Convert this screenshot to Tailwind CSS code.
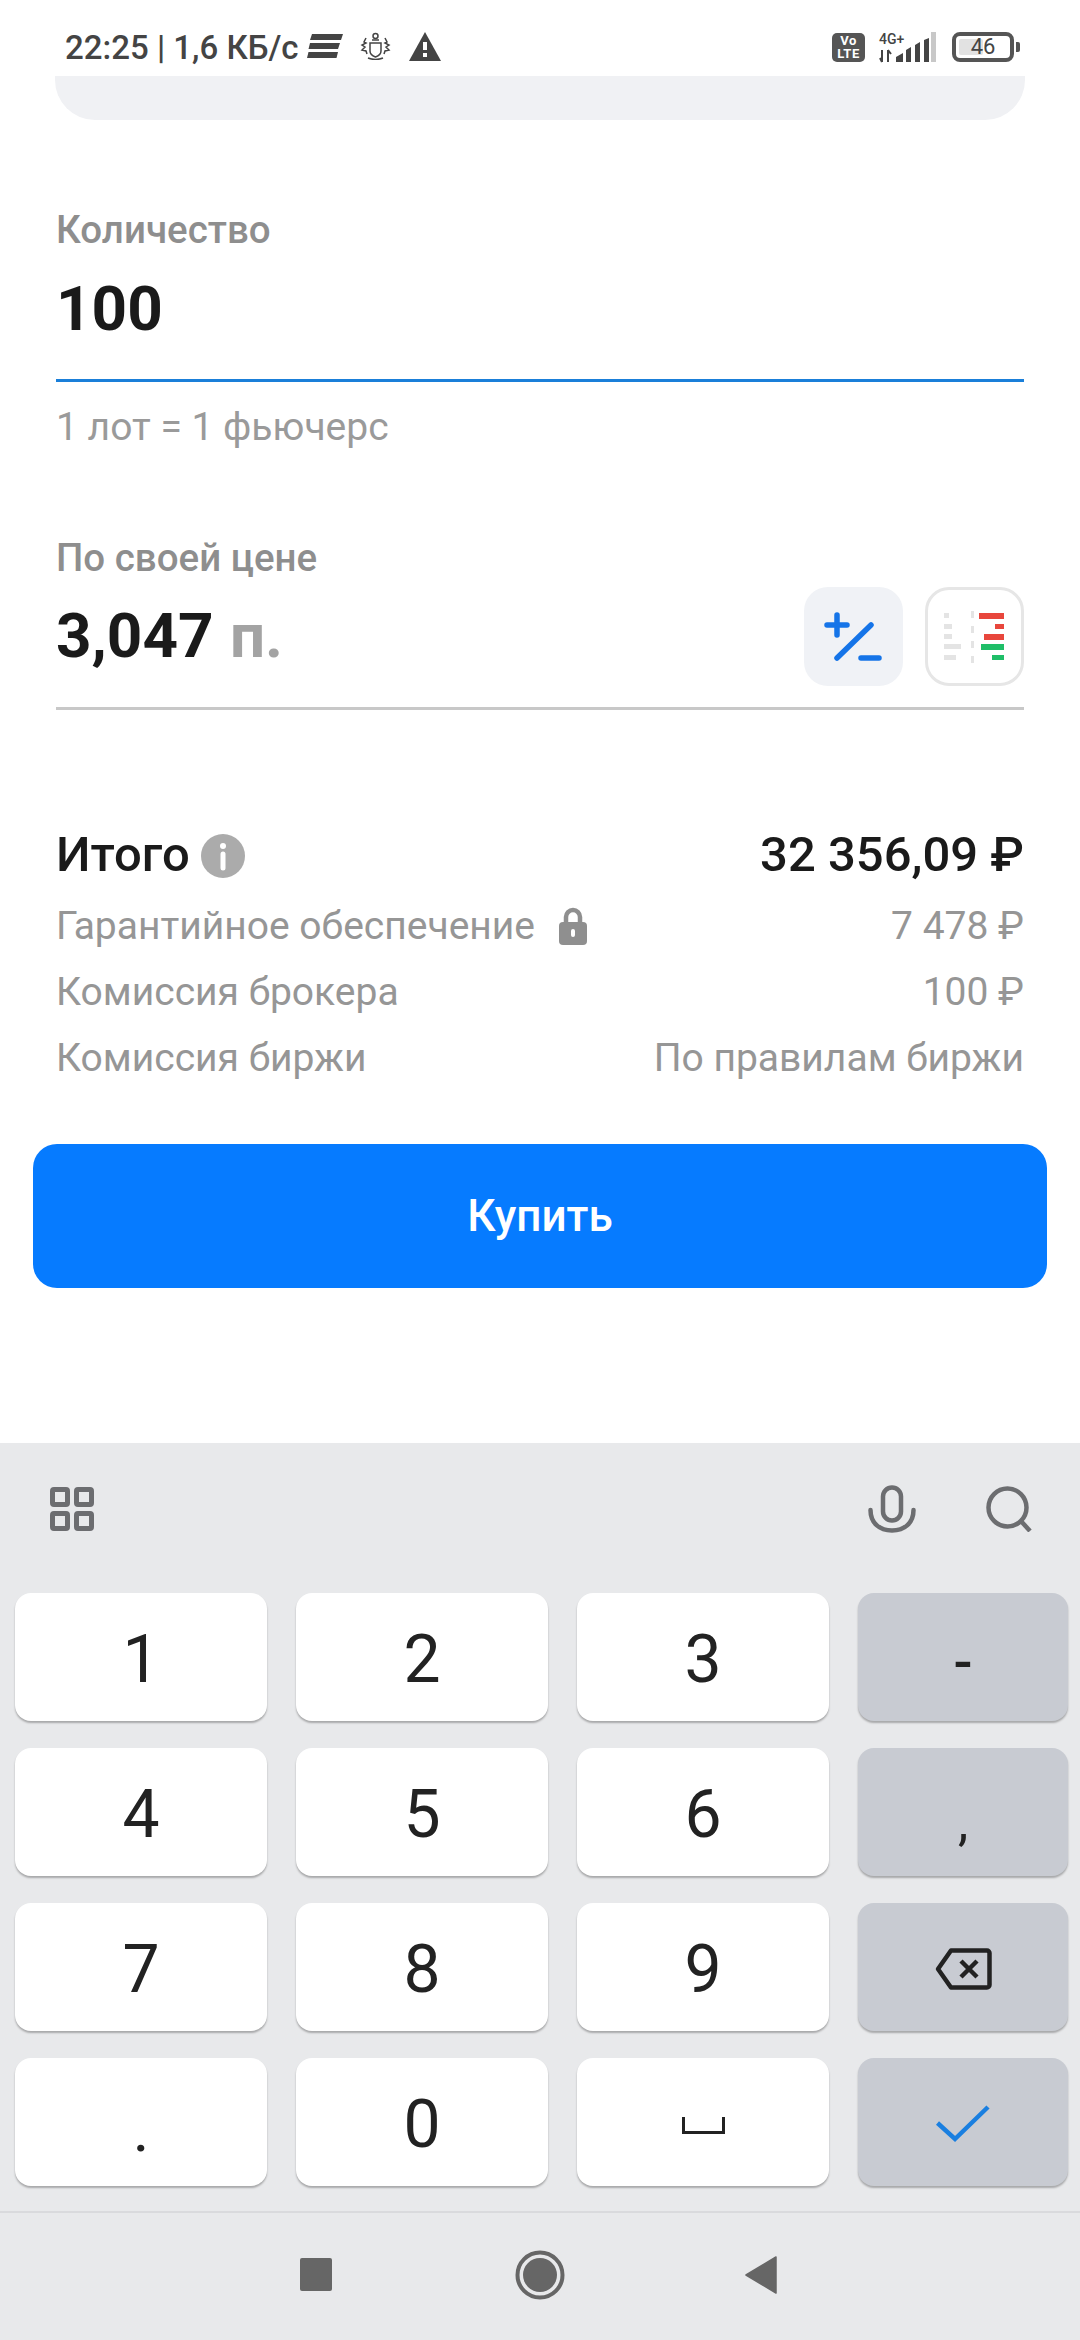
<!DOCTYPE html>
<html lang="ru">
<head>
  <meta charset="UTF-8">
  <title>Купить фьючерс</title>
  <script src="https://cdn.jsdelivr.net/npm/@tailwindcss/browser@4"></script>
</head>
<body class="bg-white">
  <div class="w-[1080px] h-[2340px] overflow-hidden flex flex-col font-['Roboto',sans-serif] text-[#1a1a1a]">

    <!-- status bar -->
    <div class="h-[76px] shrink-0 flex items-center justify-between pt-[18px] pl-[65px] pr-[60px] text-[#444]">
      <div class="flex items-center pt-[1px]">
        <span class="text-[33px] leading-none font-medium w-[242px] whitespace-nowrap">22:25 | 1,6 КБ/с</span>
        <svg class="w-[36px] h-[24px] mt-[-3px]" viewBox="0 0 36 24" fill="#444"><path d="M5 0h31l-2 6H3zM3 9h30l-2 6H1.500zM1.500 18H31l-1.500 6H0z"/></svg>
        <svg class="w-[33px] h-[28px] ml-[16px] mt-[-3px]" viewBox="0 0 33 28" fill="none" stroke="#444" stroke-width="1.500"><path d="M11 11h11v8q0 4-5.500 6q-5.500-2-5.500-6z"/><circle cx="16.500" cy="4" r="2.500"/><path d="M13 8h7M7 6l-2 4 2 1-4 2 3 2-3 3 4 1 1 3M26 6l2 4-2 1 4 2-3 2 3 3-4 1-1 3M9 26q7.500 3 15 0"/></svg>
        <svg class="w-[32px] h-[29px] ml-[17px] mt-[-3px]" viewBox="0 0 32 29"><path d="M16 0 32 29H0z" fill="#444"/><path d="M14 10h4v8h-4zM14 21h4v4h-4z" fill="#fff"/></svg>
      </div>
      <div class="flex items-center">
        <div class="w-[33px] h-[29px] rounded-[5px] bg-[#555] text-white flex flex-col items-center justify-center font-bold text-[13px] leading-[13px] tracking-[0.5px]"><span>Vo</span><span>LTE</span></div>
        <svg class="w-[58px] h-[31px] ml-[14px] overflow-visible" viewBox="0 0 58 31">
          <text x="0" y="12" font-family="Roboto" font-weight="500" font-size="14" fill="#444">4G+</text>
          <path d="M3 18v12M1 26l2 4M9 18v12M9 18l3 4" stroke="#444" stroke-width="2" fill="none"/>
          <path d="M17 30v-5l7-4v9zM27 30V18l5-3v15zM36 30V13l5-3v20z" fill="#444"/>
          <path d="M45 30V8l5-2v24z" fill="#444"/>
          <path d="M52 30V0h5v30z" fill="#c8c8c8"/>
        </svg>
        <div class="w-[62px] h-[30px] ml-[15px] rounded-[8px] border-[4px] border-[#555] relative flex items-center justify-center">
          <div class="absolute left-[3px] top-[3px] bottom-[3px] w-[24px] bg-[#e2e2e2] rounded-[2px]"></div>
          <span class="relative text-[22px] leading-none">46</span>
        </div>
        <div class="w-[4px] h-[10px] ml-[2px] bg-[#555] rounded-r-[2px]"></div>
      </div>
    </div>

    <!-- top of the previous card -->
    <div class="mx-[55px] h-[44px] shrink-0 bg-[#f0f1f4] rounded-b-[40px]"></div>

    <div class="px-[56px] shrink-0">
      <div class="mt-[90px] h-[40px] flex items-center text-[38.500px] font-medium text-[#8e8e8e]">Количество</div>
      <div class="mt-[8px] h-[124px] pb-[20px] flex items-center text-[62px] font-bold leading-none border-b-[3px] border-[#1a7fd9]">100</div>
      <div class="mt-[24px] h-[42px] flex items-center text-[39px] text-[#9a9a9a]">1 лот = 1 фьючерс</div>

      <div class="mt-[89px] h-[42px] flex items-center text-[38.500px] font-medium text-[#8e8e8e]">По своей цене</div>
      <div class="mt-[7px] h-[124px] pb-[21px] flex items-center justify-between border-b-[3px] border-[#c8c8c8]">
        <div class="text-[62px] font-bold leading-none">3,047 <span class="text-[#a3a3a3] ml-[1px]">п.</span></div>
        <div class="flex gap-[22px]">
          <div class="w-[99px] h-[99px] rounded-[24px] bg-[#f0f2f6]">
            <svg class="w-[99px] h-[99px]" viewBox="0 0 99 99" fill="none" stroke="#1574e8" stroke-width="5.500" stroke-linecap="round"><path d="M23 38h20M33 28v20M33 71 67 38M57 71h18"/></svg>
          </div>
          <div class="w-[99px] h-[99px] rounded-[24px] border-[3px] border-[#e6e6e6] bg-white">
            <svg class="w-[93px] h-[93px]" viewBox="3 3 93 93">
              <path d="M54 26h25v6H54zM70 37h9v5h-9zM59 47h20v6H59z" fill="#e8463c"/>
              <path d="M56 57h23v6H56zM67 68h12v5H67z" fill="#1fbe68"/>
              <path d="M19 26h5v5h-5zM19 37h8v5h-8zM19 47h8v5h-8zM19 57h17v5H19zM19 68h12v5H19zM46 24h3v7h-3zM46 39h3v7h-3zM46 54h3v7h-3zM46 69h3v7h-3z" fill="#e4e4e4"/>
            </svg>
          </div>
        </div>
      </div>

      <div class="mt-[117px] h-[54px] flex items-center justify-between text-[49px] font-medium leading-none">
        <div class="flex items-center">
          <span>Итого</span>
          <svg class="w-[44px] h-[44px] ml-[11px] mt-[4px]" viewBox="0 0 44 44"><circle cx="22" cy="22" r="22" fill="#ababab"/><circle cx="22" cy="12" r="3" fill="#fff"/><path d="M22 20v14" stroke="#fff" stroke-width="5" stroke-linecap="round"/></svg>
        </div>
        <span>32 356,09 ₽</span>
      </div>
      <div class="mt-[12px] flex flex-col text-[39px] text-[#969696] leading-none">
        <div class="h-[66px] flex items-center justify-between">
          <div class="flex items-center">
            <span>Гарантийное обеспечение</span>
            <svg class="w-[28px] h-[38px] ml-[24px]" viewBox="0 0 28 38"><path d="M7 18v-8a7 7 0 0 1 14 0v8" fill="none" stroke="#8f8f8f" stroke-width="4.500"/><rect x="0" y="15" width="28" height="23" rx="4" fill="#8f8f8f"/><rect x="12" y="22" width="4" height="8" rx="2" fill="#fff"/></svg>
          </div>
          <span>7 478 ₽</span>
        </div>
        <div class="h-[66px] flex items-center justify-between"><span>Комиссия брокера</span><span>100 ₽</span></div>
        <div class="h-[66px] flex items-center justify-between"><span>Комиссия биржи</span><span>По правилам биржи</span></div>
      </div>
    </div>

    <div class="mx-[33px] mt-[53px] h-[144px] shrink-0 rounded-[24px] bg-[#067bff] text-white flex items-center justify-center text-[44px] font-medium">Купить</div>

    <!-- keyboard -->
    <div class="mt-[155px] flex-1 bg-[#e8e9eb] flex flex-col">
      <div class="h-[150px] shrink-0 flex items-center justify-between pl-[50px] pr-[48px]">
        <svg class="w-[44px] h-[44px] mt-[-19px]" viewBox="0 0 44 44" fill="none" stroke="#6c6d70" stroke-width="5"><rect x="2.500" y="2.500" width="15" height="15" rx="1.500"/><rect x="26.500" y="2.500" width="15" height="15" rx="1.500"/><rect x="2.500" y="26.500" width="15" height="15" rx="1.500"/><rect x="26.500" y="26.500" width="15" height="15" rx="1.500"/></svg>
        <div class="flex items-center gap-[70px] mt-[-19px]">
          <svg class="w-[48px] h-[48px]" viewBox="0 0 48 48" fill="none" stroke="#6c6d70" stroke-width="4.500" stroke-linecap="round"><rect x="15" y="2.500" width="18" height="33" rx="9"/><path d="M2.500 25c0 13 9 20.500 21.500 20.500S45.500 38 45.500 25"/></svg>
          <svg class="w-[46px] h-[46px]" viewBox="0 0 46 46" fill="none" stroke="#6c6d70" stroke-width="4.500"><circle cx="21.500" cy="21.500" r="19"/><path d="M34 34 44 45"/></svg>
        </div>
      </div>
      <div class="grid grid-cols-[252px_252px_252px_210px] grid-rows-[128px_128px_128px_128px] gap-x-[29px] gap-y-[27px] pl-[15px] text-[66px] leading-none text-[#222]">
        <div class="bg-white rounded-[16px] shadow-[0_2px_2px_rgba(0,0,0,0.28)] flex items-center justify-center pt-[5px]">1</div>
        <div class="bg-white rounded-[16px] shadow-[0_2px_2px_rgba(0,0,0,0.28)] flex items-center justify-center pt-[5px]">2</div>
        <div class="bg-white rounded-[16px] shadow-[0_2px_2px_rgba(0,0,0,0.28)] flex items-center justify-center pt-[5px]">3</div>
        <div class="bg-[#c8cbd2] rounded-[16px] shadow-[0_2px_2px_rgba(0,0,0,0.28)] flex items-center justify-center text-[56px] font-medium pt-[10px]">-</div>
        <div class="bg-white rounded-[16px] shadow-[0_2px_2px_rgba(0,0,0,0.28)] flex items-center justify-center pt-[5px]">4</div>
        <div class="bg-white rounded-[16px] shadow-[0_2px_2px_rgba(0,0,0,0.28)] flex items-center justify-center pt-[5px]">5</div>
        <div class="bg-white rounded-[16px] shadow-[0_2px_2px_rgba(0,0,0,0.28)] flex items-center justify-center pt-[5px]">6</div>
        <div class="bg-[#c8cbd2] rounded-[16px] shadow-[0_2px_2px_rgba(0,0,0,0.28)] flex items-center justify-center text-[52px] pt-[22px]">,</div>
        <div class="bg-white rounded-[16px] shadow-[0_2px_2px_rgba(0,0,0,0.28)] flex items-center justify-center pt-[5px]">7</div>
        <div class="bg-white rounded-[16px] shadow-[0_2px_2px_rgba(0,0,0,0.28)] flex items-center justify-center pt-[5px]">8</div>
        <div class="bg-white rounded-[16px] shadow-[0_2px_2px_rgba(0,0,0,0.28)] flex items-center justify-center pt-[5px]">9</div>
        <div class="bg-[#c8cbd2] rounded-[16px] shadow-[0_2px_2px_rgba(0,0,0,0.28)] flex items-center justify-center pt-[4px]">
          <svg class="w-[57px] h-[42px]" viewBox="0 0 57 42" fill="none" stroke="#222" stroke-width="4.500" stroke-linejoin="round"><path d="M16 2.500h36a2.500 2.500 0 0 1 2.500 2.500v32a2.500 2.500 0 0 1-2.500 2.500H16L3 21z"/><path d="M26 13l16 16M42 13 26 29"/></svg>
        </div>
        <div class="bg-white rounded-[16px] shadow-[0_2px_2px_rgba(0,0,0,0.28)] flex items-center justify-center text-[52px] pt-[24px] font-medium">.</div>
        <div class="bg-white rounded-[16px] shadow-[0_2px_2px_rgba(0,0,0,0.28)] flex items-center justify-center pt-[5px]">0</div>
        <div class="bg-white rounded-[16px] shadow-[0_2px_2px_rgba(0,0,0,0.28)] flex items-center justify-center pt-[6px]">
          <svg class="w-[43px] h-[17px]" viewBox="0 0 43 17" fill="none" stroke="#222" stroke-width="3"><path d="M1.500 0v15.500h40V0"/></svg>
        </div>
        <div class="bg-[#c8cbd2] rounded-[16px] shadow-[0_2px_2px_rgba(0,0,0,0.28)] flex items-center justify-center pt-[4px]">
          <svg class="w-[54px] h-[38px]" viewBox="0 0 54 38" fill="none" stroke="#1a7fe0" stroke-width="4.500"><path d="M1.500 18 19 34 52 2"/></svg>
        </div>
      </div>

      <!-- nav bar -->
      <div class="mt-[25px] flex-1 border-t-[2px] border-[#d9dadd] flex items-center relative">
        <div class="absolute left-[300px] top-[45px] w-[32px] h-[33px] rounded-[2px] bg-[#666]"></div>
        <svg class="absolute left-[515px] top-[36px] w-[50px] h-[52px]" viewBox="0 0 50 52"><circle cx="25" cy="26" r="22.500" fill="none" stroke="#666" stroke-width="4"/><circle cx="25" cy="26" r="17" fill="#666"/></svg>
        <svg class="absolute left-[745px] top-[43px] w-[32px] h-[38px]" viewBox="0 0 32 38"><path d="M31 1 1 19l30 18z" fill="#666" stroke="#666" stroke-width="1.500" stroke-linejoin="round"/></svg>
      </div>
    </div>
  </div>
</body>
</html>
